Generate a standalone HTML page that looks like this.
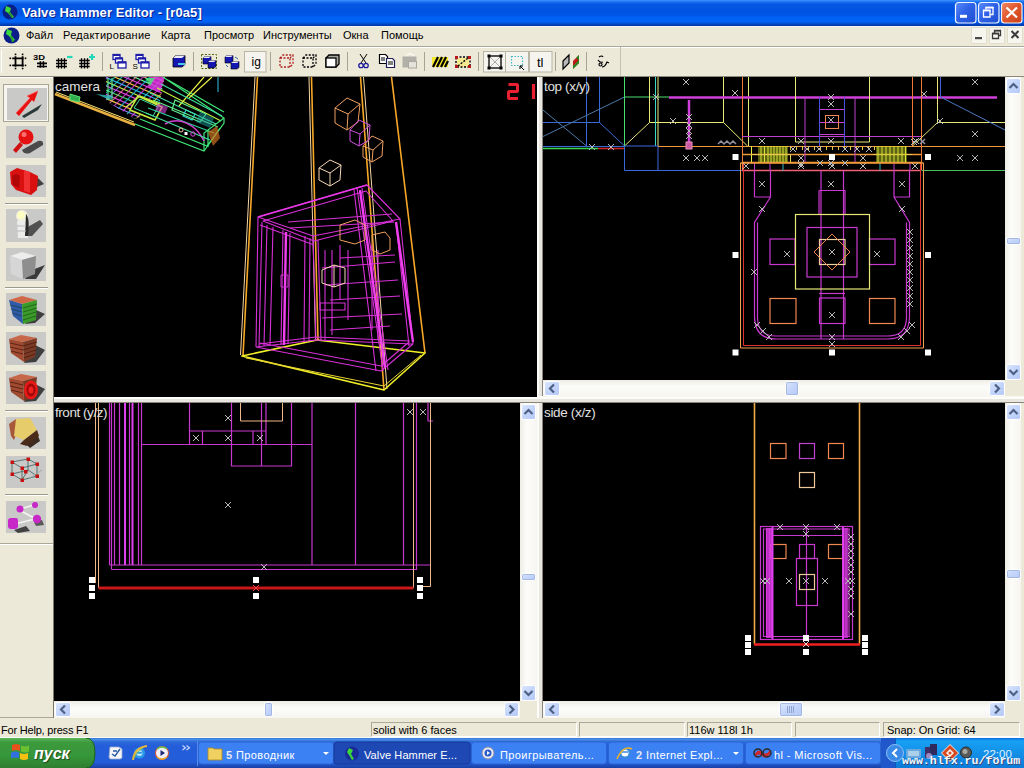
<!DOCTYPE html>
<html><head><meta charset="utf-8">
<style>
*{margin:0;padding:0;box-sizing:border-box}
html,body{width:1024px;height:768px;overflow:hidden;background:#ECE9D8;font-family:"Liberation Sans",sans-serif;position:relative}
.a{position:absolute}
#title{left:0;top:0;width:1024px;height:26px;background:linear-gradient(#3D95FF 0px,#1C6FF0 2px,#0758E4 4px,#0053E0 10px,#0055E6 15px,#0064F6 18px,#0062F4 22px,#0047C4 24px,#0035A8 26px)}
#title .t{left:22px;top:5px;color:#fff;font-weight:bold;font-size:13px;text-shadow:1px 1px #0A1E8F;letter-spacing:0.1px}
.tb{top:2px;width:21px;height:21px;border:1px solid #fff;border-radius:3px;background:linear-gradient(135deg,#6FA0FF,#2A5FE8 50%,#1D4ED8)}
#menu{left:0;top:26px;width:1024px;height:20px;background:#ECE9D8;border-top:1px solid #F2F2EE}
#menu span{position:absolute;top:2px;font-size:11px;color:#000}
#tool{left:0;top:46px;width:1024px;height:31px;background:#ECE9D8;border-top:1px solid #ACA899;box-shadow:inset 0 1px #fff;border-bottom:1px solid #8C8A7C}
.vp{background:#000;overflow:hidden}
.lbl{color:#E0E0E0;font-size:13.5px;position:absolute;left:1px;top:2px;letter-spacing:0px;white-space:nowrap}
.sbv{background:linear-gradient(90deg,#EEEDE5,#FCFCFA 40%,#F6F5F0)}
.sbh{background:linear-gradient(#EEEDE5,#FCFCFA 40%,#F6F5F0)}
.btn{width:15px;height:15px;border:1px solid #fff;border-radius:2px;background:linear-gradient(135deg,#D9E5FE,#B7CCF7)}
#status{left:0;top:718px;width:1024px;height:20px;background:#ECE9D8;border-bottom:1px solid #F8F8F4}
#status span{position:absolute;top:6px;font-size:11px;color:#000}
.pn{top:4px;height:15px;border-top:1px solid #ACA899;border-left:1px solid #ACA899;border-right:1px solid #fff;border-bottom:1px solid #fff}
#task{left:0;top:738px;width:1024px;height:30px;background:linear-gradient(#3168D5 0px,#4993E6 1px,#2D68D8 4px,#245DDA 8px,#245DDA 24px,#1941A5 30px)}
.tt{top:11px;color:#fff;font-size:11px;white-space:nowrap;letter-spacing:0.4px}
.tt b{color:#E8E8F0}
.wm{left:902px;top:16px;color:#F4F8FF;font-family:"Liberation Mono",monospace;font-weight:bold;font-size:11.6px;letter-spacing:0px;text-shadow:1px 1px 0 #3A4A78;transform:scaleY(0.95);transform-origin:0 100%}
</style></head><body>
<div id="title" class="a">
  <div class="a t">Valve Hammer Editor - [r0a5]</div>
  <svg class="a" style="left:0;top:0" width="1024" height="26">
  <defs><linearGradient id="gtb" x1="0" y1="0" x2="1" y2="1"><stop offset="0" stop-color="#5A8CF8"/><stop offset="0.45" stop-color="#2F62E8"/><stop offset="1" stop-color="#1F4FD0"/></linearGradient>
  <linearGradient id="gcl" x1="0" y1="0" x2="1" y2="1"><stop offset="0" stop-color="#F08A68"/><stop offset="0.45" stop-color="#E2582E"/><stop offset="1" stop-color="#C8401A"/></linearGradient></defs>
  <rect x="955.5" y="2.5" width="20.5" height="20.5" rx="3" fill="url(#gtb)" stroke="#F0F4FF" stroke-width="1.2"/>
  <rect x="978.5" y="2.5" width="20.5" height="20.5" rx="3" fill="url(#gtb)" stroke="#F0F4FF" stroke-width="1.2"/>
  <rect x="1001.5" y="2.5" width="20.5" height="20.5" rx="3" fill="url(#gcl)" stroke="#F8F0F0" stroke-width="1.2"/>
  <rect x="960" y="14.8" width="7" height="3" fill="#fff"/>
  <path d="M983.5 10.5h6.5v6.5h-6.5z" fill="none" stroke="#fff" stroke-width="1.3"/><rect x="983" y="9.6" width="7.5" height="1.6" fill="#fff"/>
  <path d="M986 9.5V7.5h7v7h-2.5" fill="none" stroke="#fff" stroke-width="1.3"/><rect x="985.5" y="6.8" width="8" height="1.6" fill="#fff"/>
  <path d="M1006.5 7.5l10.5 10M1017 7.5l-10.5 10" stroke="#fff" stroke-width="2.3"/>
  <circle cx="10" cy="12" r="7.5" fill="#0A1E8A"/><path d="M6 6l5 2-1 4 4 5-2 1-4-5-3-2z" fill="#3CD83C"/><path d="M9 12l3 5" stroke="#2A8A2A" stroke-width="1.5"/>
  </svg>
</div>
<div id="menu" class="a">
  <svg class="a" style="left:0;top:-1px" width="1024" height="20" viewBox="0 26 1024 20">
  <circle cx="11.5" cy="35.5" r="8" fill="#0A1E8A"/><path d="M7 29l5 2-1 4 4 5-2 1-4-5-3-2z" fill="#3CD83C"/><path d="M11 36l2 6" stroke="#2A9A2A" stroke-width="2"/>
  <g fill="#F6F5EE" stroke="#E0DDCC"><rect x="971.5" y="27.5" width="15" height="16" rx="1"/><rect x="989.5" y="27.5" width="15" height="16" rx="1"/><rect x="1007.5" y="27.5" width="15" height="16" rx="1"/></g>
  <rect x="975" y="37" width="7" height="2.2" fill="#4A4A4A"/>
  <path d="M992.5 33.5h6v5h-6zM994.5 33V30.5h6v5h-2" fill="none" stroke="#3A3A3A" stroke-width="1.3"/><rect x="992" y="32.8" width="7" height="1.5" fill="#3A3A3A"/><rect x="994" y="30" width="7" height="1.5" fill="#3A3A3A"/>
  <path d="M1011.5 31l7 7M1018.5 31l-7 7" stroke="#3A3A3A" stroke-width="2"/>
  </svg>
  <span style="left:26px">Файл</span>
  <span style="left:63px;letter-spacing:0.28px">Редактирование</span>
  <span style="left:161px">Карта</span>
  <span style="left:204px">Просмотр</span>
  <span style="left:263px">Инструменты</span>
  <span style="left:343px">Окна</span>
  <span style="left:381px">Помощь</span>
</div>
<svg class="a" style="left:0;top:0" width="54" height="718" viewBox="0 0 54 718">
<rect x="0" y="77" width="54" height="641" fill="#ECE9D8"/>
<line x1="53.5" y1="77" x2="53.5" y2="718" stroke="#7A7868"/><line x1="0" y1="543.5" x2="53" y2="543.5" stroke="#ACA899"/><line x1="0" y1="717.5" x2="53" y2="717.5" stroke="#ACA899"/><line x1="0" y1="544.5" x2="53" y2="544.5" stroke="#FFFFFF"/><line x1="0" y1="77.5" x2="53" y2="77.5" stroke="#FFFFFF"/>
<rect x="3.5" y="84.5" width="45" height="37" fill="#F6F5EF" stroke="#A9A793"/>
<g fill="#C9C9C7"><rect x="7" y="88" width="40" height="32"/><rect x="6" y="126" width="40" height="32"/><rect x="6" y="165" width="40" height="32"/>
<rect x="6" y="209" width="40" height="33"/><rect x="6" y="248" width="40" height="33"/>
<rect x="6" y="293" width="40" height="33"/><rect x="6" y="332" width="40" height="33"/><rect x="6" y="371" width="40" height="33"/>
<rect x="6" y="417" width="40" height="32"/><rect x="6" y="456" width="40" height="32"/><rect x="6" y="501" width="40" height="32"/></g>
<g stroke="#9C9A8C" stroke-width="1"><line x1="5" y1="203.5" x2="48" y2="203.5"/><line x1="5" y1="287.5" x2="48" y2="287.5"/><line x1="5" y1="410.5" x2="48" y2="410.5"/><line x1="5" y1="494.5" x2="48" y2="494.5"/></g>
<g stroke="#fff" stroke-width="1"><line x1="5" y1="204.5" x2="48" y2="204.5"/><line x1="5" y1="288.5" x2="48" y2="288.5"/><line x1="5" y1="411.5" x2="48" y2="411.5"/><line x1="5" y1="495.5" x2="48" y2="495.5"/></g>
<!-- 1 arrow -->
<path d="M22 116L42 104L38 110L24 118Z" fill="#2A3A38"/>
<path d="M16 113L30 98L27 96L38 91L34 102L32 100L19 116Z" fill="#E81010"/><path d="M16 113L30 98L27 96L38 91" fill="none" stroke="#FF6060" stroke-width="0.8"/>
<!-- 2 magnifier -->
<path d="M22 150L38 141Q44 140 43 145L30 153Q24 155 22 150Z" fill="#4A4A4A"/>
<circle cx="26" cy="137" r="7.5" fill="#E41212"/><path d="M20 142L13 150L16 153L23 145Z" fill="#D01010"/><circle cx="24" cy="134.5" r="2.5" fill="#FF7070"/>
<!-- 3 camera shape -->
<path d="M30 190L44 184L38 178L30 182Z" fill="#404040"/>
<path d="M10 172L17 168L30 172L38 176L37 190L31 195L16 190L11 184Z" fill="#D81010"/><path d="M24 170L30 172V193L24 191Z" fill="#F03030"/><path d="M12 176Q16 172 20 176L19 188L13 185Z" fill="#B00808"/>
<!-- 4 light -->
<path d="M26 228L40 220L43 224L32 236L26 236Z" fill="#505050"/>
<circle cx="22" cy="216" r="6" fill="#F0F0E0"/><circle cx="21" cy="215" r="3.8" fill="#FFFFC0"/>
<path d="M17 221H28V238H18Z" fill="#ECECEC"/><path d="M26 214Q30 218 28 236H25Z" fill="#2A2A2A"/><path d="M17 226h9M17 231h9" stroke="#B8B8B8" stroke-width="1"/>
<!-- 5 cube -->
<path d="M32 270L45 265L36 279H25Z" fill="#3A3A3A"/>
<path d="M10 256L22 252L36 256L22 260Z" fill="#EDEDED"/><path d="M10 256L22 260L23 279L11 274Z" fill="#D6D6D6"/><path d="M22 260L36 256L35 274L23 279Z" fill="#8E8E8E"/>
<!-- 6 colored brick -->
<path d="M36 310L45 314L35 323L25 324Z" fill="#3E3E3E"/>
<path d="M9 300L22 296L37 300L22 304Z" fill="#D06848"/><path d="M9 300L22 304L23 324L13 316Z" fill="#2E5AA8"/><path d="M22 304L37 300L36 320L23 324Z" fill="#3A9A2A"/>
<g stroke="#103010" stroke-width="0.8" opacity="0.6"><path d="M23 308L37 304M23 312L37 308M23 316L36 312M23 320L36 316M10 305L22 308M11 309L22 312M12 313L22 316"/></g>
<!-- 7 brick -->
<path d="M35 345L45 350L36 362L24 363Z" fill="#3E3E3E"/>
<path d="M9 339L21 335L37 338L23 342Z" fill="#C8684A"/><path d="M9 339L23 342L24 362L11 353Z" fill="#A04A30"/><path d="M23 342L37 338L35 357L24 362Z" fill="#7A3A24"/>
<g stroke="#4A1A10" stroke-width="0.8"><path d="M23 346L37 342M23 350L36 346M24 354L36 350M24 358L35 354M10 343L23 346M10 347L23 350M11 351L23 354"/></g>
<!-- 8 brick target -->
<path d="M35 384L45 389L36 401L24 402Z" fill="#3E3E3E"/>
<path d="M9 378L21 374L37 377L23 381Z" fill="#C8684A"/><path d="M9 378L23 381L24 401L11 392Z" fill="#A04A30"/><path d="M23 381L37 377L35 396L24 401Z" fill="#7A3A24"/>
<g stroke="#4A1A10" stroke-width="0.8"><path d="M10 382L23 385M10 386L23 389M11 390L23 393"/></g>
<ellipse cx="31" cy="390" rx="7" ry="9.5" fill="#E81818"/><ellipse cx="31" cy="390" rx="4.5" ry="6.5" fill="#A00808"/><ellipse cx="31" cy="390" rx="2.5" ry="3.5" fill="#F02020"/>
<!-- 9 clip -->
<path d="M26 444L38 436L40 441L30 448Z" fill="#3A2A20"/>
<path d="M9 424L16 419L22 420L14 440L11 436Z" fill="#A8583A"/><path d="M16 419L30 418L37 430L24 440L14 436Z" fill="#E6CC6A"/><path d="M24 440L37 430L39 436L27 446L20 444Z" fill="#4A2A18"/>
<!-- 10 vertex -->
<g stroke="#4A6A68" stroke-width="0.9" fill="none"><path d="M12 462L28 459L37 464L22 468ZM12 462V474L22 480L37 476V464M22 468V480M28 459V470L37 476M12 474L28 470M28 470L22 480"/><path d="M30 478L42 470" stroke="#9AA"/></g>
<g fill="#C81010"><rect x="10.5" y="460.5" width="3.5" height="3.5"/><rect x="26.5" y="457.5" width="3.5" height="3.5"/><rect x="35.5" y="462.5" width="3.5" height="3.5"/><rect x="20.5" y="466.5" width="3.5" height="3.5"/><rect x="24" y="470" width="3.5" height="3.5"/><rect x="10.5" y="472.5" width="3.5" height="3.5"/><rect x="35.5" y="474.5" width="3.5" height="3.5"/><rect x="20.5" y="478.5" width="3.5" height="3.5"/></g>
<!-- 11 path -->
<path d="M14 530L26 526L30 531L18 533Z" fill="#2A2A2A" opacity="0.85"/><path d="M34 522L42 520L44 525L36 526Z" fill="#2A2A2A" opacity="0.7"/>
<g stroke="#F4F4F4" stroke-width="1.8"><path d="M20 509L34 505M21 511L36 519M15 524L35 519"/></g>
<g fill="#C828C8"><circle cx="20" cy="509" r="3.5"/><circle cx="35" cy="505" r="3"/><circle cx="37" cy="519" r="4.2"/><path d="M8 521Q8 518 11 518H16Q18 518 18 521V526Q18 529 15 529H11Q8 529 8 526Z"/></g>
</svg>
<div id="tool" class="a">
<svg class="a" style="left:0;top:-1px" width="624" height="31" viewBox="0 46 624 31">
<g stroke="#A5A597" stroke-width="1"><line x1="1.5" y1="50" x2="1.5" y2="73" stroke="#fff"/>
<line x1="102.5" y1="52" x2="102.5" y2="71"/><line x1="159.5" y1="52" x2="159.5" y2="71"/><line x1="193.5" y1="52" x2="193.5" y2="71"/>
<line x1="270.5" y1="52" x2="270.5" y2="71"/><line x1="347.5" y1="52" x2="347.5" y2="71"/><line x1="424.5" y1="52" x2="424.5" y2="71"/>
<line x1="478.5" y1="52" x2="478.5" y2="71"/><line x1="555.5" y1="52" x2="555.5" y2="71"/><line x1="586.5" y1="52" x2="586.5" y2="71"/>
<line x1="620.5" y1="47" x2="620.5" y2="76" stroke="#C5C2B2"/></g>
<!-- grid icon -->
<g stroke="#000" stroke-width="1.8"><path d="M15.5 56.2V66.7M22.6 56.2V66.7M12.2 58.3H23.8M12.2 65.4H23.8"/></g>
<g fill="#000"><rect x="9.5" y="57.5" width="1.6" height="1.6"/><rect x="24.7" y="57.5" width="1.6" height="1.6"/><rect x="9.5" y="64.6" width="1.6" height="1.6"/><rect x="24.7" y="64.6" width="1.6" height="1.6"/><rect x="14.7" y="53.6" width="1.6" height="1.6"/><rect x="21.8" y="53.6" width="1.6" height="1.6"/><rect x="14.7" y="67.7" width="1.6" height="1.6"/><rect x="21.8" y="67.7" width="1.6" height="1.6"/></g>
<text x="33" y="59.8" font-size="7.2" font-weight="bold" font-family="Liberation Sans" textLength="12" lengthAdjust="spacingAndGlyphs">3D</text>
<g stroke="#000" stroke-width="1.6"><path d="M40.4 61.2V67.8M43.4 61.2V67.8M37 63.4H47M37 66.5H47"/>
</g><g stroke="#000" stroke-width="1.3"><path d="M58.5 58.2V68.5M61.5 58.2V68.5M64.5 58.2V68.5M56 60.5H67M56 63.5H67M56 66.5H67"/>
<path d="M81.5 58.2V68.5M84.5 58.2V68.5M87.5 58.2V68.5M79.2 60.5H89.7M79.2 63.5H89.7M79.2 66.5H89.7"/></g>
<g stroke="#20D8B8" stroke-width="2.2"><path d="M67 57h5.5"/><path d="M89 57h6M92 54v6"/></g>
<!-- L S stacks -->
<g fill="#fff" stroke="#1C1CA8" stroke-width="1.3">
<rect x="113" y="54.5" width="7" height="5"/><rect x="115.5" y="58" width="7" height="5"/><rect x="118" y="62" width="8" height="6"/>
<rect x="136" y="54.5" width="7" height="5"/><rect x="138.5" y="58" width="7" height="5"/><rect x="141" y="62" width="8" height="6"/></g>
<g fill="#1C1CA8"><rect x="113" y="54" width="7" height="2"/><rect x="115.5" y="57.5" width="7" height="2"/><rect x="118" y="61.5" width="8" height="2"/>
<rect x="136" y="54" width="7" height="2"/><rect x="138.5" y="57.5" width="7" height="2"/><rect x="141" y="61.5" width="8" height="2"/></g>
<text x="109.5" y="69" font-size="8" font-family="Liberation Sans">L</text><text x="132.5" y="69" font-size="8" font-family="Liberation Sans">S</text>
<!-- blue cube -->
<path d="M173 58l3-2.5h9v9l-3 2.5h-9z" fill="#1515B0" stroke="#000" stroke-width="0.8"/><path d="M173 58l3-2.5h9l-3 2.5z" fill="#E8E8F8"/><path d="M178 64h7" stroke="#49C8E8" stroke-width="2"/>
<!-- grouped cubes -->
<rect x="201.5" y="54.5" width="15" height="14" fill="none" stroke="#4E6A10" stroke-width="1" stroke-dasharray="2,1.5"/>
<g fill="#1515B0" stroke="#000" stroke-width="0.6"><path d="M203 58l2-1.5h6v6l-2 1.5h-6z"/><path d="M208 62l2-1.5h6v6l-2 1.5h-6z"/>
<path d="M225 57l2-1.5h6v6l-2 1.5h-6z"/><path d="M231 63l2-1.5h6v6l-2 1.5h-6z"/></g>
<g fill="#E8E8F8"><path d="M203 58l2-1.5h6l-2 1.5z"/><path d="M208 62l2-1.5h6l-2 1.5z"/><path d="M225 57l2-1.5h6l-2 1.5z"/><path d="M231 63l2-1.5h6l-2 1.5z"/></g>
<path d="M235 57l3 2M226 65l2 2" stroke="#2E6AAE" stroke-width="1"/>
<!-- ig pressed -->
<rect x="244.5" y="51.5" width="21.5" height="20.5" fill="#F5F4EE" stroke="#B8B5A5" stroke-width="1"/>
<text x="251.5" y="66" font-size="12" font-family="Liberation Sans">ig</text>
<!-- dashed cubes -->
<g fill="none" stroke-width="1.3" stroke-dasharray="2,1.5"><path d="M280 58l3-3h10v9l-3 3h-10z M280 58h10v9 M290 58l3-3" stroke="#B02020"/>
<path d="M303 58l3-3h10v9l-3 3h-10z M303 58h10v9 M313 58l3-3" stroke="#000"/></g>
<path d="M326 58l3-3h10v9l-3 3h-10z" fill="#A8A8A0" stroke="#000" stroke-width="1.3"/><rect x="326" y="58" width="10" height="9" fill="#fff" stroke="#000" stroke-width="1.3"/>
<!-- scissors -->
<g stroke="#000" stroke-width="1" fill="none"><path d="M360 54l6 9M367 54l-6 9"/></g><g stroke="#1C1C9A" stroke-width="1.3" fill="none"><circle cx="361" cy="65.5" r="2.2"/><circle cx="366" cy="65.5" r="2.2"/></g>
<!-- copy -->
<g fill="#fff" stroke="#000" stroke-width="1.2"><path d="M379.5 54.5h6l2 2v7h-8z"/><path d="M386.5 58.5h6l2 2v7h-8z" stroke="#1C1C5A"/></g>
<g stroke="#000" stroke-width="1"><path d="M381 58h4M381 60h4M388 62h5M388 64h5"/></g>
<!-- paste disabled -->
<path d="M402.5 56.5h14v11h-14z" fill="#B0AFA8"/><rect x="408.5" y="61.5" width="8" height="6.5" fill="#E4E2DA" stroke="#A8A8A0"/><path d="M406 56l2-2h4l2 2" stroke="#fff" fill="none"/>
<!-- stripes -->
<rect x="432" y="57" width="16" height="10" fill="#F4E830"/>
<g stroke="#000" stroke-width="2.2"><path d="M433 67l5-10M437 67l5-10M441 67l5-10M445 67l3-6"/></g>
<!-- red/yellow dashed -->
<rect x="457" y="58" width="12" height="9" fill="#F4E890"/>
<g stroke="#000" stroke-width="1.4" stroke-dasharray="2,1.5" fill="none"><rect x="456" y="57" width="14" height="10"/><path d="M458 66l10-8"/></g>
<g fill="#B81818"><rect x="455" y="56" width="3" height="3"/><rect x="468" y="56" width="3" height="3"/><rect x="455" y="65" width="3" height="3"/><rect x="468" y="65" width="3" height="3"/></g>
<!-- pressed buttons -->
<rect x="483.5" y="51.5" width="22" height="20.5" fill="#F5F4EE" stroke="#B8B5A5"/>
<rect x="505.5" y="51.5" width="23" height="20.5" fill="#F5F4EE" stroke="#B8B5A5"/>
<rect x="529.5" y="51.5" width="22.5" height="20.5" fill="#F5F4EE" stroke="#B8B5A5"/>
<path d="M490 57l10 10M500 57l-10 10" stroke="#999" stroke-width="0.8"/><rect x="489" y="56" width="12" height="12" fill="none" stroke="#000" stroke-width="1.3"/>
<g fill="#000"><rect x="487.5" y="54.5" width="3" height="3"/><rect x="499.5" y="54.5" width="3" height="3"/><rect x="487.5" y="66.5" width="3" height="3"/><rect x="499.5" y="66.5" width="3" height="3"/></g>
<rect x="511.5" y="56.5" width="11" height="9" fill="none" stroke="#3BBAC8" stroke-width="1.2" stroke-dasharray="1.5,1.5"/><path d="M520 66l4 4M520 66v3M520 66h3" stroke="#000" stroke-width="1"/>
<text x="537" y="67" font-size="13" font-family="Liberation Sans">tl</text>
<!-- parallelograms -->
<path d="M563 61l6-6v8l-6 6z" fill="#B8B8B8" stroke="#000" stroke-width="1.2"/>
<path d="M573 61l6-6v8l-6 6z" fill="#C01818"/><path d="M573 66l6-6v3l-6 6z" fill="#208A20"/><path d="M576 58l3-3v5z" fill="#208A20"/>
<!-- path icon -->
<g stroke="#000" stroke-width="1.2" fill="none"><path d="M599 57q3-2 4 0M598 60q2 3 5 2M602 67q3 0 5-5l2 1"/><circle cx="600.5" cy="64.5" r="1.5"/></g>
</svg>
</div>

<!-- viewports -->
<div class="a" style="left:537px;top:77px;width:6px;height:641px;background:linear-gradient(90deg,#FCFCF8 0,#FCFCF8 2px,#E9E6DF 2px,#E9E6DF 5px,#8A857C 5px)"></div>
<div class="a" style="left:54px;top:397px;width:483px;height:6px;background:linear-gradient(#FCFCF8 0,#FCFCF8 2px,#E9E6DF 2px,#E9E6DF 5px,#8A857C 5px)"></div>
<div class="a" style="left:537px;top:396px;width:487px;height:7px;background:linear-gradient(#F4F2EA 0,#FCFCF8 1px,#FCFCF8 3px,#E9E6DF 3px,#E9E6DF 6px,#8A857C 6px)"></div>

<div class="a vp" style="left:54px;top:77px;width:483px;height:320px"><svg class="a" style="left:0;top:0" width="483" height="320" viewBox="54 77 483 320">
<g fill="none" stroke-linejoin="round">
<!-- orange frustum lines -->
<g stroke="#F8A828" stroke-width="1.6">
<path d="M257.5 77L243 356M311.5 77L318 340M360.5 77L384 390M391.5 77L425 353"/>
</g>
<g stroke="#F8D8A8" stroke-width="1">
<path d="M255 77L240.5 355M309 77L315.5 339M363.5 77L387 389"/>
</g>
<!-- yellow base -->
<path d="M242 356L384 390L425 353L317 340Z" stroke="#F0F028" stroke-width="1.6"/>
<path d="M246 358L384 386L421 355" stroke="#E8D030" stroke-width="1"/>
<!-- magenta box -->
<g stroke="#D830D8" stroke-width="1.1">
<path d="M258 217L367 185L400 219L313 236Z"/>
<path d="M263 221L366 191L393 221L314 241Z"/>
<path d="M260 225L314 245M288 222L392 214M290 228L394 222"/>
<path d="M258 217L256 347M262 222L259 347M267 225L264 346M273 227L270 346M283 230L281 345M290 233L288 344M305 236L304 342M310 238L309 341"/>
<path d="M313 236L316 340M318 240L321 340"/>
<path d="M400 219L413 344M396 222L409 346"/>
<path d="M357 188L383 371M362 188L388 370M354 190L376 371"/>
<path d="M256 347L381 371L413 344M260 343L381 366L409 342M256 347L316 340L413 344M259 344L316 337L410 341"/>
<path d="M325 250V340M332 250V335M340 245V300M348 250V320M372 245V330M378 250V340"/>
<path d="M322 268L395 262M325 285L398 280M330 300L400 296M322 318L402 314M330 330L390 326M340 258L395 255"/>
<path d="M320 303H345V310H320Z"/>
</g>
<g stroke="#F040F0" stroke-width="2.4"><path d="M396 222L413 342"/><path d="M286 232L284 345"/><path d="M360 190L385 368"/></g>
<path d="M258 217L367 185" stroke="#E838E8" stroke-width="1.8"/>
<rect x="281" y="275" width="7" height="12" fill="none" stroke="#D030D0"/>
<!-- cubes -->
<g stroke="#F0A060" stroke-width="1">
<path d="M335 108L347 98L360 104L358 122L347 130L335 123Z M335 108L348 114L360 104 M348 114L347 130"/>
<path d="M363 146L372 136L383 141L382 156L372 162L363 157Z M363 146L373 150L383 141 M373 150L372 162"/>
</g>
<g stroke="#D050E0" stroke-width="1"><path d="M350 130L359 120L370 125L369 140L359 146L350 141Z M350 130L360 134L370 125 M360 134L359 146"/></g>
<g stroke="#F8D8B8" stroke-width="1"><path d="M319 168L330 160L341 165L340 180L330 186L319 180Z M319 168L330 173L341 165 M330 173L330 186"/>
<path d="M322 270L334 265L345 268V283L334 287L322 283Z M334 265V287"/></g>
<g stroke="#F0A060" stroke-width="1"><path d="M340 225L355 220L365 225V240L355 244L340 240Z M372 235L385 232L390 238V250L380 254L372 250Z"/></g>
</g>
<!-- cluster -->
<defs><clipPath id="cpb"><path d="M106 77L165 77L158 110L135 119L106 101Z"/></clipPath></defs>
<g clip-path="url(#cpb)" stroke-width="1.2" fill="none">
<path d="M90.0 16.0L180.0 54.7" stroke="#9070F0"/>
<path d="M90.0 20.2L180.0 58.9" stroke="#F080A0"/>
<path d="M90.0 24.4L180.0 63.1" stroke="#20B0E0"/>
<path d="M90.0 28.6L180.0 67.3" stroke="#40E060"/>
<path d="M90.0 32.8L180.0 71.5" stroke="#60F0A0"/>
<path d="M90.0 37.0L180.0 75.7" stroke="#E040E0"/>
<path d="M90.0 41.2L180.0 79.9" stroke="#40E060"/>
<path d="M90.0 45.4L180.0 84.1" stroke="#30D0D0"/>
<path d="M90.0 49.6L180.0 88.3" stroke="#C0F040"/>
<path d="M90.0 53.8L180.0 92.5" stroke="#F080A0"/>
<path d="M90.0 58.0L180.0 96.7" stroke="#60F0A0"/>
<path d="M90.0 62.2L180.0 100.9" stroke="#E040E0"/>
<path d="M90.0 66.4L180.0 105.1" stroke="#F0C040"/>
<path d="M90.0 70.6L180.0 109.3" stroke="#20B0E0"/>
<path d="M90.0 74.8L180.0 113.5" stroke="#C0F040"/>
<path d="M90.0 79.0L180.0 117.7" stroke="#E040E0"/>
<path d="M90.0 83.2L180.0 121.9" stroke="#40E060"/>
<path d="M90.0 87.4L180.0 126.1" stroke="#E040E0"/>
<path d="M90.0 91.6L180.0 130.3" stroke="#F0C040"/>
<path d="M90.0 95.8L180.0 134.5" stroke="#9070F0"/>
<path d="M90.0 100.0L180.0 138.7" stroke="#30D0D0"/>
<path d="M90.0 104.2L180.0 142.9" stroke="#F0C040"/>
<path d="M90.0 108.4L180.0 147.1" stroke="#30D0D0"/>
<path d="M90.0 112.6L180.0 151.3" stroke="#C0F040"/>
<path d="M90.0 116.8L180.0 155.5" stroke="#30D0D0"/>
<path d="M90.0 121.0L180.0 159.7" stroke="#60F0A0"/>
<path d="M90.0 125.2L180.0 163.9" stroke="#30D0D0"/>
<path d="M90.0 129.4L180.0 168.1" stroke="#30D0D0"/>
<path d="M34.0 130.0L94.0 70.0" stroke="#40E060" opacity="0.8"/>
<path d="M41.0 130.0L101.0 70.0" stroke="#40E060" opacity="0.8"/>
<path d="M48.0 130.0L108.0 70.0" stroke="#E040E0" opacity="0.8"/>
<path d="M55.0 130.0L115.0 70.0" stroke="#E040E0" opacity="0.8"/>
<path d="M62.0 130.0L122.0 70.0" stroke="#30D0D0" opacity="0.8"/>
<path d="M69.0 130.0L129.0 70.0" stroke="#30D0D0" opacity="0.8"/>
<path d="M76.0 130.0L136.0 70.0" stroke="#9070F0" opacity="0.8"/>
<path d="M83.0 130.0L143.0 70.0" stroke="#F080A0" opacity="0.8"/>
<path d="M90.0 130.0L150.0 70.0" stroke="#E040E0" opacity="0.8"/>
<path d="M97.0 130.0L157.0 70.0" stroke="#20B0E0" opacity="0.8"/>
<path d="M104.0 130.0L164.0 70.0" stroke="#E040E0" opacity="0.8"/>
<path d="M111.0 130.0L171.0 70.0" stroke="#30D0D0" opacity="0.8"/>
<path d="M118.0 130.0L178.0 70.0" stroke="#E040E0" opacity="0.8"/>
<path d="M125.0 130.0L185.0 70.0" stroke="#F0C040" opacity="0.8"/>
<path d="M132.0 130.0L192.0 70.0" stroke="#9070F0" opacity="0.8"/>
<path d="M139.0 130.0L199.0 70.0" stroke="#40E060" opacity="0.8"/>
<path d="M146.0 130.0L206.0 70.0" stroke="#F080A0" opacity="0.8"/>
<path d="M153.0 130.0L213.0 70.0" stroke="#F0C040" opacity="0.8"/>
</g>
<path d="M108 78V100M112 78V100" stroke="#60E090" stroke-width="1.2"/>
<path d="M130 110L138 96L162 107L155 120Z" fill="#000" stroke="#D0F040" stroke-width="1.5"/>
<path d="M134 108L140 99L158 107L153 116Z" fill="none" stroke="#40E0A0" stroke-width="1"/>
<path d="M150 77L165 77L160 92L148 88Z" fill="#E030E0" opacity="0.85"/>
<path d="M145 78L155 78L150 86Z" fill="#40F070" opacity="0.8"/>
<path d="M96 94L113 96L110 100Z" fill="#30C0C0" opacity="0.8"/>
<path d="M158 103L168 107L165 114L155 110Z" fill="#D040D0" opacity="0.6"/>
<g fill="none" stroke-width="1.2">
<path d="M135 124L204 151L224 123V118L163 77" stroke="#40E878"/>
<path d="M140 119L207 146L220 128" stroke="#40E878"/>
<path d="M148 108L214 133" stroke="#30D0A0"/>
<path d="M153 100L218 127" stroke="#60F090"/>
<path d="M157 88L221 121" stroke="#C0F040"/>
<path d="M168 80L224 112" stroke="#40E878"/>
<path d="M204 151V133L224 118M208 147V130" stroke="#40E878"/>
<path d="M204 77L179 106M212 77L189 98" stroke="#E8F040"/>
<path d="M165 124C178 116 196 124 204 141" stroke="#D040D0" stroke-width="1.5"/>
<path d="M218 77v15" stroke="#30A0C0"/>
<path d="M126 107L140 96L160 104" stroke="#C0F040"/>
<path d="M186 110L195 114L192 120L183 116Z" stroke="#30D0D0"/>
<path d="M150 93L216 124M146 113L210 140M161 84L222 116" stroke="#40E0A0"/><path d="M175 100L206 114L200 122L172 110Z" stroke="#60F090"/><path d="M200 112L214 118L210 128L196 122Z" fill="#20A0A0" opacity="0.5"/>
</g>
<circle cx="181" cy="130" r="2" fill="none" stroke="#F0C0A0"/><rect x="184.5" y="132" width="3" height="3" fill="#fff"/><circle cx="193" cy="134" r="2.2" fill="none" stroke="#E040E0"/>
<path d="M208 132L213 146L220 138L217 126Z" fill="#D07020" opacity="0.7"/>
<path d="M55 94L135 125" stroke="#E8B040" stroke-width="2.5"/><path d="M56 92L134 122" stroke="#F8E070" stroke-width="1"/>
<path d="M70 94L80 97L79 102L70 100Z" fill="#30B050" stroke="#60E070"/>
<!-- red digits -->
<path d="M508.5 84.5H517.5V91.5H508.5V98.5H518" fill="none" stroke="#E82030" stroke-width="3" stroke-linejoin="bevel"/>
<path d="M533.5 84V99" stroke="#E82030" stroke-width="3.2"/>
</svg>
<span class="lbl">camera</span></div>
<div class="a vp" style="left:543px;top:77px;width:462px;height:303px"><svg class="a" style="left:0;top:0" width="462" height="303" viewBox="543 77 462 303">
<g fill="none" stroke-width="1">
<!-- left blue/green area -->
<g stroke="#3A6AD8"><path d="M586.5 77V146M599.5 77V122.5H543M599.5 122.5L624.5 146M543 146.5H624.5"/></g>
<g stroke="#4A78A8"><path d="M543 110L586.5 146M543 136.5L624.5 97"/></g>
<path d="M543 148.5H598" stroke="#38D850" stroke-width="1.5"/>
<path d="M598 148.5H624.5" stroke="#D02828" stroke-width="1.5"/>
<g stroke="#48E070"><path d="M624.5 77V146M624.5 97H669"/></g>
<g stroke="#E8E878"><path d="M649.5 77V122.5H723.5V77M649.5 122.5L624.5 146M723.5 122.5L747.5 146M658 77V146M748.5 77V146"/></g>
<path d="M655.5 77V146" stroke="#38D8C8"/>
<g stroke="#3A6AD8"><path d="M624.5 146V170.5H742M658 146V170.5M624.5 146H658"/></g>
<path d="M658 146.5H1005" stroke="#F09838"/>
<path d="M669 97.5H997" stroke="#D040D8" stroke-width="2.5"/>
<path d="M689 100V146" stroke="#D040D8" stroke-width="2.5"/>
<rect x="686" y="142" width="6" height="7" fill="#C85AA0" stroke="#F090C0"/>
<!-- middle upper -->
<path d="M742.5 77V170" stroke="#F07838"/>
<g stroke="#E8E878"><path d="M795.5 77V142H869.5V77"/></g>
<g stroke="#C040D0"><path d="M805 97V146M855 97V146M819.5 109.5H844.5M819.5 122.5H844.5M819.5 134.5H844.5M742 136.5H921.5"/></g>
<g stroke="#5050E0"><path d="M819.5 97V146M844.5 97V146"/></g>
<rect x="825.5" y="115.5" width="13" height="13" stroke="#F08850"/>
<!-- right upper -->
<g stroke="#F07838"><path d="M912.5 77V146M921.5 77V170"/></g>
<g stroke="#E8E878"><path d="M937.5 77V122.5H1005M937.5 122.5L912.5 146"/></g>
<path d="M940.5 77V97" stroke="#4060E0"/>
<path d="M940.5 97L1005 130" stroke="#4A78C0"/>
<path d="M921.5 170.5H1005" stroke="#48C060"/>
<!-- band -->
<g stroke="#F09838"><path d="M742 154.5H921M742 162.5H921" stroke-width="1.5"/></g>
<path d="M742 170.5H921" stroke="#F06070" stroke-width="1.5"/>
<g stroke="#E8F040"><path d="M751.5 146V162M761 146V162M764.5 146V162M768 146V162M771 146V162M774 146V162M777 146V162M780 146V162M783 146V162M786 146V162M878 146V162M882 146V162M886 146V162M890 146V162M894 146V162M898 146V162M902 146V162M905.5 146V162"/></g>
<rect x="758" y="146" width="30" height="16" fill="#C8D828" opacity="0.45"/><path d="M790.5 146V150M796.5 146V150M802.5 146V150M808.5 146V150M814.5 146V150M820.5 146V150M826.5 146V150M832.5 146V150M838.5 146V150M844.5 146V150M850.5 146V150M856.5 146V150M862.5 146V150M868.5 146V150M874.5 146V150M751 154.5H790.5V163M873 154.5H912" stroke="#E8C850"/>
<rect x="876" y="146" width="31" height="16" fill="#C8D828" opacity="0.45"/>
<g stroke="#C040D0"><path d="M754.5 162V171M770 162V171M894 162V171M910 162V171M805 146V162M855 146V162"/></g>
<g stroke="#30B8C0"><path d="M783 162V171M880 162V171"/></g>
<!-- outer box -->
<path d="M740.5 163V348H923.5V163" stroke="#F0A050"/>
<path d="M743.5 163V345.5H920.5V163" stroke="#E03030"/>
<path d="M740.5 163H923.5" stroke="#F09838" stroke-width="1.5"/>
<!-- magenta shapes -->
<g stroke="#C838D0" stroke-width="1.2">
<path d="M754.5 170.5V197M770.5 170.5V197H754.5M770.5 197L754.5 222.5V316Q754.5 339 776 339H888Q909.5 339 909.5 316V222.5L894 197V170.5M909.5 170.5V197H894"/>
<path d="M757.5 222.5V317Q757.5 336 776 336H888Q906.5 336 906.5 317V222.5"/>
<path d="M821 170.5V339M843.5 170.5V339"/>
<path d="M819 190.5H845V214M819 190.5V214"/>
<rect x="807" y="227.5" width="50" height="49.5"/>
<rect x="770" y="239" width="25" height="25.5"/>
<rect x="869.5" y="239" width="25.5" height="25.5"/>
<rect x="819.5" y="298" width="25.5" height="25.5"/>
<path d="M819 293.5H845"/>
</g>
<rect x="795.5" y="214.5" width="74" height="74.5" stroke="#E8E878" stroke-width="1.2"/>
<rect x="819.5" y="239.5" width="25.5" height="25" stroke="#F0D0A0" stroke-width="1.2"/>
<path d="M832 234L850 252L832 270L814 252Z" stroke="#F08850"/>
<g stroke="#F08850" stroke-width="1.2"><rect x="770" y="298.5" width="26" height="25"/><rect x="869.5" y="298.5" width="25.5" height="25"/></g>
<!-- X marks -->
<g stroke="#B8B8B8" stroke-width="1">
<path d="M683 79L689 85M689 79L683 85"/>
<path d="M670 118L676 124M676 118L670 124"/><path d="M686 114L692 120M692 114L686 120"/><path d="M686 122L692 128M692 122L686 128"/><path d="M686 128L692 134M692 128L686 134"/><path d="M686 133L692 139M692 133L686 139"/>
<path d="M589 144L595 150M595 144L589 150"/><path d="M608 144L614 150M614 144L608 150"/><path d="M683 155L689 161M689 155L683 161"/><path d="M694 155L700 161M700 155L694 161"/>
<path d="M732 90L738 96M738 90L732 96"/><path d="M759 138L765 144M765 138L759 144"/><path d="M702 155L708 161M708 155L702 161"/><path d="M798 161L804 167M804 161L798 167"/><path d="M798 138L804 144M804 138L798 144"/><path d="M828 138L834 144M834 138L828 144"/><path d="M828 160L834 166M834 160L828 166"/>
<path d="M828 94L834 100M834 94L828 100"/><path d="M828 101L834 107M834 101L828 107"/><path d="M828 117L834 123M834 117L828 123"/><path d="M828 181L834 187M834 181L828 187"/>
<path d="M972 79L978 85M978 79L972 85"/><path d="M921 91L927 97M927 91L921 97"/><path d="M937 118L943 124M943 118L937 124"/><path d="M972 131L978 137M978 131L972 137"/><path d="M957 155L963 161M963 155L957 161"/><path d="M972 155L978 161M978 155L972 161"/><path d="M898 138L904 144M904 138L898 144"/><path d="M913 138L919 144M919 138L913 144"/>
<path d="M759 181L765 187M765 181L759 187"/><path d="M759 206L765 212M765 206L759 212"/><path d="M899 181L905 187M905 181L899 187"/><path d="M899 206L905 212M905 206L899 212"/>
<path d="M784 251L790 257M790 251L784 257"/><path d="M874 251L880 257M880 251L874 257"/><path d="M829 249L835 255M835 249L829 255"/><path d="M751 269L757 275M757 269L751 275"/>
<path d="M907 229L913 235M913 229L907 235"/><path d="M907 237L913 243M913 237L907 243"/><path d="M907 245L913 251M913 245L907 251"/><path d="M907 253L913 259M913 253L907 259"/><path d="M907 261L913 267M913 261L907 267"/><path d="M907 269L913 275M913 269L907 275"/><path d="M907 277L913 283M913 277L907 283"/><path d="M907 285L913 291M913 285L907 291"/><path d="M907 293L913 299M913 293L907 299"/><path d="M907 301L913 307M913 301L907 307"/>
<path d="M829 312L835 318M835 312L829 318"/><path d="M829 334L835 340M835 334L829 340"/><path d="M829 341L835 347M835 341L829 347"/>
<path d="M754 322L760 328M760 322L754 328"/><path d="M760 328L766 334M766 328L760 334"/><path d="M766 334L772 340M772 334L766 340"/><path d="M898 334L904 340M904 334L898 340"/><path d="M904 328L910 334M910 328L904 334"/><path d="M909 322L915 328M915 322L909 328"/>
<path d="M911 139L917 145M917 139L911 145"/>
<path d="M653 94L659 100M659 94L653 100"/><path d="M798 155L804 161M804 155L798 161"/><path d="M860 155L866 161M866 155L860 161"/><path d="M798 163L804 169M804 163L798 169"/><path d="M829 163L835 169M835 163L829 169"/><path d="M860 163L866 169M866 163L860 169"/><path d="M912 163L918 169M918 163L912 169"/><path d="M743 163L749 169M749 163L743 169"/><path d="M790 146L796 152M796 146L790 152"/><path d="M804 146L810 152M810 146L804 152"/><path d="M816 146L822 152M822 146L816 152"/><path d="M842 146L848 152M848 146L842 152"/><path d="M854 146L860 152M860 146L854 152"/><path d="M866 146L872 152M872 146L866 152"/><path d="M817 160L823 166M823 160L817 166"/><path d="M842 160L848 166M848 160L842 166"/>
</g>
<g stroke="#9090A0" stroke-width="1.5"><path d="M718 144l3-3 3 3 3-3 3 3 3-3 3 3"/><path d="M920 139l5 5M925 139l-5 5"/></g>
</g>
<g fill="#fff">
<rect x="732.5" y="154" width="6" height="6"/><rect x="829" y="154" width="6" height="6"/><rect x="925" y="154" width="6" height="6"/>
<rect x="732.5" y="252" width="6" height="6"/><rect x="925" y="252" width="6" height="6"/>
<rect x="732.5" y="349.5" width="6" height="6"/><rect x="829" y="349.5" width="6" height="6"/><rect x="925" y="349.5" width="6" height="6"/>
</g>
</svg>
<span class="lbl" style="letter-spacing:-0.35px">top (x/y)</span></div>
<div class="a vp" style="left:54px;top:403px;width:466px;height:298px"><svg class="a" style="left:0;top:0" width="466" height="298" viewBox="54 403 466 298">
<g fill="none" stroke-width="1">
<g stroke="#F0B888"><path d="M95.5 403V583M98.5 403V588"/></g>
<g stroke="#C838D0" stroke-width="1.2">
<path d="M109.5 403V565M111.5 403V569.5M114.5 403V565M119.5 403V565M129.5 403V565M138.5 403V565M141.5 403V565"/>
<path d="M109.5 565H430.5M111.5 569.5H416.5V403"/>
<path d="M141.5 444.5H312"/>
<path d="M189.5 403V444.5M266 403V444.5M189.5 431H266M202.5 431V444.5M253 431V444.5"/>
<path d="M231.5 403V466H291.5V403M261.5 403V466"/>
<path d="M312 403V565M355.5 403V565M403.5 403V565"/>
<path d="M428 403V421H433"/>
</g>
<path d="M125 403V565M132.5 403V565" stroke="#E040F0" stroke-width="2"/>
<path d="M240.5 403V421H282.5V403" stroke="#F0B888"/>
<path d="M413.5 403V588M430.5 403V586.5H420" stroke="#F0B888"/>
<path d="M98.5 588H413.5" stroke="#C81818" stroke-width="3"/>
<g stroke="#B8B8B8"><path d="M225 415L231 421M231 415L225 421"/>
<path d="M193 435L199 441M199 435L193 441"/><path d="M225 435L231 441M231 435L225 441"/><path d="M257 435L263 441M263 435L257 441"/><path d="M225 502L231 508M231 502L225 508"/><path d="M261 564L267 570M267 564L261 570"/><path d="M407 409L413 415M413 409L407 415"/><path d="M420 409L426 415M426 409L420 415"/></g>
<path d="M253 585L259 591M259 585L253 591" stroke="#F04040"/>
</g>
<g fill="#fff"><rect x="89" y="577" width="6" height="6"/><rect x="89" y="585" width="6" height="6"/><rect x="89" y="593" width="6" height="6"/>
<rect x="253" y="577" width="6" height="6"/><rect x="253" y="593" width="6" height="6"/>
<rect x="417" y="577" width="6" height="6"/><rect x="417" y="585" width="6" height="6"/><rect x="417" y="593" width="6" height="6"/></g>
</svg>
<span class="lbl" style="letter-spacing:-0.45px">front (y/z)</span></div>
<div class="a vp" style="left:543px;top:403px;width:462px;height:298px"><svg class="a" style="left:0;top:0" width="462" height="298" viewBox="543 403 462 298">
<g fill="none" stroke-width="1">
<g stroke="#F0A848" stroke-width="1.6"><path d="M754.5 403V644.5M859.5 403V644.5"/></g>
<g stroke="#F08850" stroke-width="1.2"><rect x="770.5" y="443.5" width="15.5" height="15"/><rect x="828.5" y="443.5" width="15" height="15"/><rect x="770.5" y="544.5" width="15.5" height="14"/><rect x="828.5" y="544.5" width="15" height="14"/></g>
<rect x="799.5" y="472.5" width="15" height="15" stroke="#F0C8A0" stroke-width="1.2"/>
<rect x="799.5" y="443.5" width="15" height="15" stroke="#C040D0" stroke-width="1.2"/>
<g stroke="#C838D0" stroke-width="1.2">
<rect x="760.5" y="526.5" width="92" height="113"/>
<path d="M763 529H850M772 535.5H843M806.5 527V639M763.5 529V637M766.5 529V637M769.5 529V637M846 529V637M849 529V637M772 529V637"/>
<rect x="799.5" y="544.5" width="15" height="14"/>
<rect x="796.5" y="558.5" width="21" height="47"/>
<path d="M763 636.5H850"/>
</g>
<g fill="#D838E0"><rect x="766" y="528" width="6" height="110" opacity="0.85"/><rect x="843" y="528" width="5" height="110" opacity="0.75"/></g>
<path d="M772.5 527V639M843 527V639" stroke="#E040F0" stroke-width="2"/>
<rect x="799.5" y="574.5" width="15" height="15" stroke="#F0C8A0" stroke-width="1.2"/>
<path d="M754 644.5H860" stroke="#F02020" stroke-width="2.6"/>
<g stroke="#B8B8B8"><path d="M777 524L783 530M783 524L777 530"/>
<path d="M803 524L809 530M809 524L803 530"/><path d="M834 524L840 530M840 524L834 530"/><path d="M803 531L809 537M809 531L803 537"/><path d="M786 578L792 584M792 578L786 584"/><path d="M822 578L828 584M828 578L822 584"/><path d="M803 578L809 584M809 578L803 584"/>
<path d="M760 578L766 584M766 578L760 584"/><path d="M764 578L770 584M770 578L764 584"/><path d="M845 578L851 584M851 578L845 584"/><path d="M849 578L855 584M855 578L849 584"/>
<path d="M848 534L854 540M854 534L848 540"/><path d="M848 541L854 547M854 541L848 547"/><path d="M848 548L854 554M854 548L848 554"/><path d="M848 555L854 561M854 555L848 561"/><path d="M848 562L854 568M854 562L848 568"/><path d="M848 569L854 575M854 569L848 575"/><path d="M848 586L854 592M854 586L848 592"/><path d="M848 593L854 599M854 593L848 599"/><path d="M848 611L854 617M854 611L848 617"/>
</g>
<path d="M803 641L809 647M809 641L803 647" stroke="#F0D0D0"/>
</g>
<g fill="#fff"><rect x="745" y="635" width="6" height="6"/><rect x="745" y="642" width="6" height="6"/><rect x="745" y="649" width="6" height="6"/>
<rect x="803" y="635" width="6" height="6"/><rect x="803" y="649" width="6" height="6"/>
<rect x="862" y="635" width="6" height="6"/><rect x="862" y="642" width="6" height="6"/><rect x="862" y="649" width="6" height="6"/></g>
</svg>
<span class="lbl" style="letter-spacing:-0.33px">side (x/z)</span></div>

<!-- scrollbars -->
<div class="a sbv" style="left:1005px;top:77px;width:16px;height:303px"></div>
<div class="a sbh" style="left:543px;top:380px;width:462px;height:16px"></div>
<div class="a sbv" style="left:520px;top:403px;width:17px;height:298px"></div>
<div class="a sbh" style="left:54px;top:701px;width:466px;height:17px"></div>
<div class="a sbv" style="left:1005px;top:403px;width:16px;height:298px"></div>
<div class="a sbh" style="left:543px;top:701px;width:462px;height:17px"></div>

<svg class="a" style="left:0;top:0;pointer-events:none" width="1024" height="768">
<defs><linearGradient id="gb" x1="0" y1="0" x2="1" y2="1"><stop offset="0" stop-color="#DCE7FD"/><stop offset="0.5" stop-color="#C4D5FB"/><stop offset="1" stop-color="#B3C8F5"/></linearGradient></defs>
<rect x="1006.5" y="78.5" width="14" height="15" rx="2" fill="url(#gb)" stroke="#fff"/><path d="M1009.5 88.0l4-4 4 4" stroke="#4D6185" stroke-width="2.2" fill="none"/>
<rect x="1006.5" y="364.5" width="14" height="15" rx="2" fill="url(#gb)" stroke="#fff"/><path d="M1009.5 370.0l4 4 4-4" stroke="#4D6185" stroke-width="2.2" fill="none"/>
<rect x="1006.5" y="237.5" width="14" height="7" rx="2" fill="url(#gb)" stroke="#fff"/><rect x="1007.5" y="238.5" width="12" height="5" rx="1" fill="none" stroke="#9DB0DA" stroke-width="0.8"/>
<rect x="544.5" y="381.5" width="15" height="14" rx="2" fill="url(#gb)" stroke="#fff"/><path d="M554.0 384.5l-4 4 4 4" stroke="#4D6185" stroke-width="2.2" fill="none"/>
<rect x="989.5" y="381.5" width="15" height="14" rx="2" fill="url(#gb)" stroke="#fff"/><path d="M995.0 384.5l4 4-4 4" stroke="#4D6185" stroke-width="2.2" fill="none"/>
<rect x="785.5" y="381.5" width="13" height="14" rx="2" fill="url(#gb)" stroke="#fff"/><rect x="786.5" y="382.5" width="11" height="12" rx="1" fill="none" stroke="#9DB0DA" stroke-width="0.8"/>
<rect x="521.5" y="404.5" width="14" height="15" rx="2" fill="url(#gb)" stroke="#fff"/><path d="M524.5 414.0l4-4 4 4" stroke="#4D6185" stroke-width="2.2" fill="none"/>
<rect x="521.5" y="685.5" width="14" height="15" rx="2" fill="url(#gb)" stroke="#fff"/><path d="M524.5 691.0l4 4 4-4" stroke="#4D6185" stroke-width="2.2" fill="none"/>
<rect x="521.5" y="573.5" width="14" height="7" rx="2" fill="url(#gb)" stroke="#fff"/><rect x="522.5" y="574.5" width="12" height="5" rx="1" fill="none" stroke="#9DB0DA" stroke-width="0.8"/>
<rect x="55.5" y="702.5" width="15" height="14" rx="2" fill="url(#gb)" stroke="#fff"/><path d="M65.0 705.5l-4 4 4 4" stroke="#4D6185" stroke-width="2.2" fill="none"/>
<rect x="504.5" y="702.5" width="14" height="14" rx="2" fill="url(#gb)" stroke="#fff"/><path d="M509.5 705.5l4 4-4 4" stroke="#4D6185" stroke-width="2.2" fill="none"/>
<rect x="264.5" y="702.5" width="8" height="14" rx="2" fill="url(#gb)" stroke="#fff"/><rect x="265.5" y="703.5" width="6" height="12" rx="1" fill="none" stroke="#9DB0DA" stroke-width="0.8"/>
<rect x="1006.5" y="404.5" width="14" height="15" rx="2" fill="url(#gb)" stroke="#fff"/><path d="M1009.5 414.0l4-4 4 4" stroke="#4D6185" stroke-width="2.2" fill="none"/>
<rect x="1006.5" y="685.5" width="14" height="15" rx="2" fill="url(#gb)" stroke="#fff"/><path d="M1009.5 691.0l4 4 4-4" stroke="#4D6185" stroke-width="2.2" fill="none"/>
<rect x="1006.5" y="569.5" width="14" height="9" rx="2" fill="url(#gb)" stroke="#fff"/><rect x="1007.5" y="570.5" width="12" height="7" rx="1" fill="none" stroke="#9DB0DA" stroke-width="0.8"/>
<rect x="544.5" y="702.5" width="15" height="14" rx="2" fill="url(#gb)" stroke="#fff"/><path d="M554.0 705.5l-4 4 4 4" stroke="#4D6185" stroke-width="2.2" fill="none"/>
<rect x="989.5" y="702.5" width="15" height="14" rx="2" fill="url(#gb)" stroke="#fff"/><path d="M995.0 705.5l4 4-4 4" stroke="#4D6185" stroke-width="2.2" fill="none"/>
<rect x="779.5" y="702.5" width="23" height="14" rx="2" fill="url(#gb)" stroke="#fff"/><rect x="780.5" y="703.5" width="21" height="12" rx="1" fill="none" stroke="#9DB0DA" stroke-width="0.8"/><g stroke="#8FA4D0" stroke-width="1"><path d="M787.5 706v7M789.5 706v7M791.5 706v7M793.5 706v7"/></g>
</svg>
<div id="status" class="a">
  <span style="left:1px;letter-spacing:-0.2px">For Help, press F1</span>
  <div class="a pn" style="left:371px;width:206px"></div>
  <div class="a pn" style="left:579px;width:106px"></div>
  <div class="a pn" style="left:687px;width:105px"></div>
  <div class="a pn" style="left:795px;width:85px"></div>
  <div class="a pn" style="left:883px;width:137px"></div>
  <span style="left:373px">solid with 6 faces</span>
  <span style="left:689px">116w 118l 1h</span>
  <span style="left:887px">Snap: On Grid: 64</span>
</div>
<div id="task" class="a">
<svg class="a" style="left:0;top:0" width="1024" height="30" viewBox="0 738 1024 30">
<defs>
<linearGradient id="gs" x1="0" y1="0" x2="0" y2="1"><stop offset="0" stop-color="#5DB55D"/><stop offset="0.15" stop-color="#3C9A3C"/><stop offset="0.6" stop-color="#36963A"/><stop offset="1" stop-color="#2E7E2E"/></linearGradient>
<linearGradient id="gt" x1="0" y1="0" x2="0" y2="1"><stop offset="0" stop-color="#0C70E0"/><stop offset="0.1" stop-color="#16A0F4"/><stop offset="0.5" stop-color="#1290E8"/><stop offset="1" stop-color="#0E7AD8"/></linearGradient>
</defs>
<path d="M0 738h86q9 0 9 15q0 15-9 15h-86z" fill="url(#gs)"/>
<path d="M86 738q9 0 9 15q0 15-9 15" fill="none" stroke="#1E5E1E" stroke-width="1"/>
<!-- windows logo -->
<path d="M12 745q4-2 8 0v6q-4-2-8 0z" fill="#E8501C"/><path d="M21 745.5q4 2 8 0v6q-4 2-8 0z" fill="#6AC030"/>
<path d="M11 752.5q4-2 8 0v6q-4-2-8 0z" fill="#3070E0"/><path d="M20 753q4 2 8 0v6q-4 2-8 0z" fill="#F8C010"/>
<text x="34" y="759" font-size="16" font-weight="bold" font-style="italic" fill="#fff" font-family="Liberation Sans" style="text-shadow:1px 1px 1px #1A4A1A">пуск</text>
<!-- quick launch -->
<path d="M110 747h9l3 2v9l-2 1h-10l-1-2z" fill="#F4F6FA" stroke="#9AAACA" stroke-width="0.8"/><path d="M112 754l3 2 5-7M113 751h4" stroke="#2A5AA8" stroke-width="1.4" fill="none"/>
<circle cx="139.5" cy="753" r="5.5" fill="#2A9AE8"/><circle cx="139.5" cy="753" r="3" fill="#BFE6FA"/><path d="M136.5 752.5h6" stroke="#2A9AE8" stroke-width="1.5"/><path d="M137 753h5" stroke="#2A9AE8" stroke-width="1.2"/>
<path d="M133 760q1-12 14-14" stroke="#F0B830" stroke-width="1.8" fill="none"/><path d="M134 759q3-8 9-11" stroke="#8ACA50" stroke-width="0.8" fill="none"/>
<circle cx="162" cy="753" r="7" fill="#E85828"/><circle cx="162" cy="753" r="6" fill="#F0F0F8"/><path d="M157 749q5-4 10 0" stroke="#60C050" stroke-width="1.5" fill="none"/><path d="M157 757q5 4 10 0" stroke="#F0B030" stroke-width="1.5" fill="none"/>
<path d="M160.5 750v6l4.5-3z" fill="#1A2A78"/>
<path d="M182.5 745.5l3 2.2-3 2.2M186.5 745.5l3 2.2-3 2.2" stroke="#C8DAFA" stroke-width="1.2" fill="none"/>
<line x1="197.5" y1="741" x2="197.5" y2="766" stroke="#5A8AE8"/>
<!-- task buttons -->
<rect x="198.5" y="742" width="135" height="22" rx="3" fill="#3C81F3" stroke="#2A64D4" stroke-width="1"/>
<rect x="334" y="742" width="136" height="22" rx="3" fill="#1E49B5" stroke="#17399A" stroke-width="1"/>
<rect x="471.5" y="742" width="135" height="22" rx="3" fill="#3C81F3" stroke="#2A64D4" stroke-width="1"/>
<rect x="608.5" y="742" width="135" height="22" rx="3" fill="#3C81F3" stroke="#2A64D4" stroke-width="1"/>
<rect x="745.5" y="742" width="135" height="22" rx="3" fill="#3C81F3" stroke="#2A64D4" stroke-width="1"/>
<path d="M208 748h5l1 1h8v11h-14z" fill="#F0D060" stroke="#B08820" stroke-width="0.8"/>
<path d="M323 752h6l-3 3z" fill="#fff"/><path d="M733 752h6l-3 3z" fill="#fff"/>
<circle cx="352" cy="753.5" r="7" fill="#1A2A98"/><path d="M349 748l4 2-2 4 3 5-2 1-3-5-2-3z" fill="#38D838"/>
<circle cx="488" cy="753" r="6" fill="#E8E8F0" stroke="#8A8AA8"/><circle cx="488" cy="753" r="3.5" fill="#2A5AC8"/><path d="M487 751v4l3-2z" fill="#fff"/>
<circle cx="625" cy="753" r="6" fill="#3A8AE0"/><circle cx="625" cy="753" r="3.5" fill="#fff"/><path d="M622 752h6" stroke="#3A8AE0" stroke-width="1.5"/><path d="M617 759q6-14 15-10" stroke="#F0B020" stroke-width="1.5" fill="none"/>
<path d="M755 754q3-6 7-2 4 4 8-2v4q-4 6-8 2-4-4-7 2z" fill="#D02828"/><ellipse cx="758" cy="753" rx="4" ry="4" fill="none" stroke="#2A2A2A" stroke-width="1.5"/><ellipse cx="767" cy="753" rx="4" ry="4" fill="none" stroke="#2A2A2A" stroke-width="1.5"/>
<!-- tray -->
<rect x="881" y="738" width="14" height="30" fill="#2058CC"/>
<path d="M895 738h129v30h-129z" fill="url(#gt)"/><line x1="895.5" y1="738" x2="895.5" y2="768" stroke="#0A5AB8"/>
<circle cx="895" cy="753" r="8.5" fill="#3A8AE8" stroke="#8AC0F8" stroke-width="1"/><path d="M897 749l-4 4 4 4" stroke="#fff" stroke-width="2" fill="none"/>
<rect x="906" y="749" width="15" height="9" rx="1" fill="#8AB0D8" opacity="0.75"/><rect x="908" y="751" width="11" height="5" fill="#C8E0F0" opacity="0.7"/>
<rect x="925" y="747" width="7" height="11" fill="#40306A"/><rect x="930" y="744" width="7" height="11" fill="#2E2A5E"/><circle cx="929" cy="756" r="3" fill="#D8C8F8" opacity="0.6"/>
<path d="M950 744.5l8.5 8.5-8.5 8.5-8.5-8.5z" fill="#D84820" stroke="#F8E8E0" stroke-width="1"/><path d="M950 749l4 4-4 4-4-4z" fill="#F8F0E8"/><circle cx="950" cy="753" r="1.5" fill="#D84820"/>
<circle cx="966" cy="752.5" r="5.5" fill="#5A5A58" stroke="#2A2A28" stroke-width="1"/><circle cx="965" cy="751.5" r="2.5" fill="#A8A8A0"/>
<text x="983" y="758" font-size="11.5" fill="#E0F0FF" font-family="Liberation Sans">22:00</text>
</svg>
<span class="a tt" style="left:226px"><b>5</b> Проводник</span>
<span class="a tt" style="left:364px;letter-spacing:0.1px">Valve Hammer E...</span>
<span class="a tt" style="left:500px">Проигрыватель...</span>
<span class="a tt" style="left:636px"><b>2</b> Internet Expl...</span>
<span class="a tt" style="left:774px">hl - Microsoft Vis...</span>
<span class="a wm">www.hlfx.ru/forum</span>
</div>
</body></html>
